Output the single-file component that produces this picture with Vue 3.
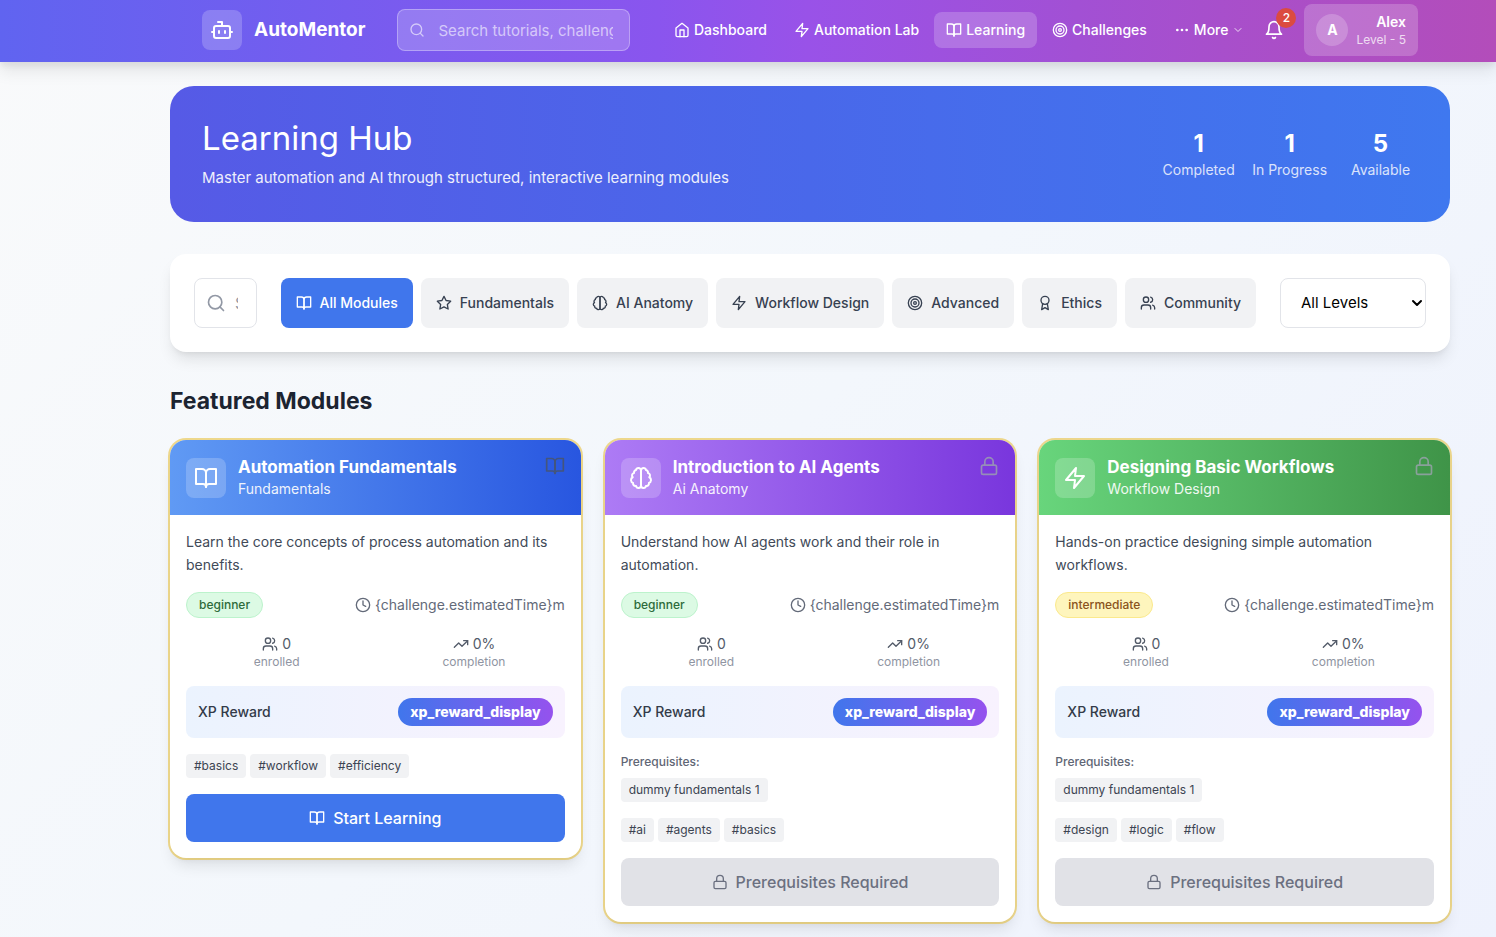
<template>
  <div class="page">
    <header class="topbar">
      <div class="topbar-inner">
        <a href="#" class="brand">
          <span class="brand-logo"><Icon name="bot" :size="24" /></span>
          <span class="brand-name">AutoMentor</span>
        </a>

        <div class="top-search">
          <Icon name="search" :size="16" />
          <input type="text" aria-label="Search" placeholder="Search tutorials, challenges..." />
        </div>

        <nav class="nav">
          <a
            v-for="item in navItems"
            :key="item.label"
            href="#"
            class="nav-link"
            :class="{ active: item.active }"
          >
            <Icon :name="item.icon" :size="16" />
            <span>{{ item.label }}</span>
          </a>
          <button type="button" class="nav-link">
            <Icon name="more" :size="16" />
            <span>More</span>
            <Icon name="chevron" :size="12" class="nav-chevron" />
          </button>
        </nav>

        <div class="user-area">
          <button type="button" class="bell" aria-label="Notifications">
            <Icon name="bell" :size="20" />
            <span class="bell-badge">2</span>
          </button>
          <button type="button" class="profile">
            <span class="avatar">A</span>
            <span class="profile-text">
              <span class="profile-name">Alex</span>
              <span class="profile-level">Level - 5</span>
            </span>
          </button>
        </div>
      </div>
    </header>

    <main class="content">
      <section class="hero">
        <div>
          <h1>Learning Hub</h1>
          <p>Master automation and AI through structured, interactive learning modules</p>
        </div>
        <div class="hero-stats">
          <div v-for="stat in stats" :key="stat.label">
            <div class="stat-value">{{ stat.value }}</div>
            <div class="stat-label">{{ stat.label }}</div>
          </div>
        </div>
      </section>

      <section class="filters">
        <div class="module-search">
          <Icon name="search" :size="20" />
          <input v-model="search" type="text" aria-label="Search modules" placeholder="Search modules..." />
        </div>
        <div class="categories">
          <button
            v-for="cat in categories"
            :key="cat.label"
            type="button"
            class="category"
            :class="{ active: cat.label === selected }"
            @click="selected = cat.label"
          >
            <Icon :name="cat.icon" :size="16" />
            <span>{{ cat.label }}</span>
          </button>
        </div>
        <div class="level">
          <select v-model="level" aria-label="Level">
            <option>All Levels</option>
            <option>Beginner</option>
            <option>Intermediate</option>
            <option>Advanced</option>
          </select>
          <Icon name="chevron" :size="16" :stroke="3" />
        </div>
      </section>

      <h2>Featured Modules</h2>

      <div class="modules">
        <article v-for="mod in modules" :key="mod.title" class="card">
          <div class="card-head" :class="mod.theme">
            <span class="card-icon"><Icon :name="mod.icon" :size="24" /></span>
            <div class="card-titles">
              <h3>{{ mod.title }}</h3>
              <p>{{ mod.category }}</p>
            </div>
            <Icon
              :name="mod.locked ? 'lock' : 'book'"
              :size="20"
              class="card-status"
              :class="{ locked: mod.locked }"
            />
          </div>

          <div class="card-body">
            <p class="description">{{ mod.description }}</p>

            <div class="row">
              <span class="difficulty" :class="mod.difficulty">{{ mod.difficulty }}</span>
              <span class="time"><Icon name="clock" :size="16" />{{ estimatedTime }}</span>
            </div>

            <div class="figures">
              <div>
                <div class="figure"><Icon name="users" :size="16" />0</div>
                <div class="figure-label">enrolled</div>
              </div>
              <div>
                <div class="figure"><Icon name="trend" :size="16" />0%</div>
                <div class="figure-label">completion</div>
              </div>
            </div>

            <div class="row xp">
              <span class="xp-label">XP Reward</span>
              <span class="xp-pill">xp_reward_display</span>
            </div>

            <div v-if="mod.prerequisites.length" class="prereq">
              <div class="prereq-title">Prerequisites:</div>
              <div class="tags">
                <span v-for="p in mod.prerequisites" :key="p" class="tag">{{ p }}</span>
              </div>
            </div>

            <div class="tags">
              <span v-for="tag in mod.tags" :key="tag" class="tag">#{{ tag }}</span>
            </div>

            <button type="button" class="action" :disabled="mod.locked">
              <Icon :name="mod.locked ? 'lock' : 'book'" :size="16" />
              <span>{{ mod.locked ? 'Prerequisites Required' : 'Start Learning' }}</span>
            </button>
          </div>
        </article>
      </div>
    </main>
  </div>
</template>

<script setup>
import { h, ref } from 'vue'

const iconPaths = {
  bot: ['M12 8V4H8', 'M6 8h12a2 2 0 0 1 2 2v8a2 2 0 0 1-2 2H6a2 2 0 0 1-2-2v-8a2 2 0 0 1 2-2z', 'M2 14h2', 'M20 14h2', 'M15 13v2', 'M9 13v2'],
  search: ['M19 11a8 8 0 1 1-16 0 8 8 0 0 1 16 0z', 'm21 21-4.3-4.3'],
  home: ['m3 9 9-7 9 7v11a2 2 0 0 1-2 2H5a2 2 0 0 1-2-2z', 'M9 22V12h6v10'],
  zap: ['M13 2 3 14h9l-1 8 10-12h-9l1-8z'],
  book: ['M2 3h6a4 4 0 0 1 4 4v14a3 3 0 0 0-3-3H2z', 'M22 3h-6a4 4 0 0 0-4 4v14a3 3 0 0 1 3-3h7z'],
  target: ['M22 12a10 10 0 1 1-20 0 10 10 0 0 1 20 0z', 'M18 12a6 6 0 1 1-12 0 6 6 0 0 1 12 0z', 'M14 12a2 2 0 1 1-4 0 2 2 0 0 1 4 0z'],
  more: ['M13 12a1 1 0 1 1-2 0 1 1 0 0 1 2 0z', 'M20 12a1 1 0 1 1-2 0 1 1 0 0 1 2 0z', 'M6 12a1 1 0 1 1-2 0 1 1 0 0 1 2 0z'],
  chevron: ['m6 9 6 6 6-6'],
  bell: ['M6 8a6 6 0 0 1 12 0c0 7 3 9 3 9H3s3-2 3-9', 'M10.3 21a1.94 1.94 0 0 0 3.4 0'],
  star: ['m12 2 3.09 6.26L22 9.27l-5 4.87 1.18 6.88L12 17.77l-6.18 3.25L7 14.14 2 9.27l6.91-1.01L12 2z'],
  brain: [
    'M9.5 2A2.5 2.5 0 0 1 12 4.5v15a2.5 2.5 0 0 1-4.96.44 2.5 2.5 0 0 1-2.96-3.08 3 3 0 0 1-.34-5.58 2.5 2.5 0 0 1 1.32-4.24 2.5 2.5 0 0 1 1.98-3A2.5 2.5 0 0 1 9.5 2z',
    'M14.5 2A2.5 2.5 0 0 0 12 4.5v15a2.5 2.5 0 0 0 4.96.44 2.5 2.5 0 0 0 2.96-3.08 3 3 0 0 0 .34-5.58 2.5 2.5 0 0 0-1.32-4.24 2.5 2.5 0 0 0-1.98-3A2.5 2.5 0 0 0 14.5 2z',
  ],
  award: ['M18 8a6 6 0 1 1-12 0 6 6 0 0 1 12 0z', 'M15.48 12.89 17 22l-5-3-5 3 1.52-9.11'],
  users: ['M16 21v-2a4 4 0 0 0-4-4H6a4 4 0 0 0-4 4v2', 'M13 7a4 4 0 1 1-8 0 4 4 0 0 1 8 0z', 'M22 21v-2a4 4 0 0 0-3-3.87', 'M16 3.13a4 4 0 0 1 0 7.75'],
  clock: ['M22 12a10 10 0 1 1-20 0 10 10 0 0 1 20 0z', 'M12 6v6l4 2'],
  trend: ['m22 7-8.5 8.5-5-5L2 17', 'M16 7h6v6'],
  lock: ['M5 11h14a2 2 0 0 1 2 2v7a2 2 0 0 1-2 2H5a2 2 0 0 1-2-2v-7a2 2 0 0 1 2-2z', 'M7 11V7a5 5 0 0 1 10 0v4'],
}

const Icon = (props) =>
  h(
    'svg',
    {
      width: props.size,
      height: props.size,
      viewBox: '0 0 24 24',
      fill: 'none',
      stroke: 'currentColor',
      'stroke-width': props.stroke || 2,
      'stroke-linecap': 'round',
      'stroke-linejoin': 'round',
      'aria-hidden': 'true',
    },
    iconPaths[props.name].map((d) => h('path', { d })),
  )
Icon.props = ['name', 'size', 'stroke']

const search = ref('')
const selected = ref('All Modules')
const level = ref('All Levels')

const estimatedTime = '{challenge.estimatedTime}m'

const navItems = [
  { label: 'Dashboard', icon: 'home' },
  { label: 'Automation Lab', icon: 'zap' },
  { label: 'Learning', icon: 'book', active: true },
  { label: 'Challenges', icon: 'target' },
]

const stats = [
  { value: 1, label: 'Completed' },
  { value: 1, label: 'In Progress' },
  { value: 5, label: 'Available' },
]

const categories = [
  { label: 'All Modules', icon: 'book' },
  { label: 'Fundamentals', icon: 'star' },
  { label: 'AI Anatomy', icon: 'brain' },
  { label: 'Workflow Design', icon: 'zap' },
  { label: 'Advanced', icon: 'target' },
  { label: 'Ethics', icon: 'award' },
  { label: 'Community', icon: 'users' },
]

const modules = [
  {
    title: 'Automation Fundamentals',
    category: 'Fundamentals',
    description: 'Learn the core concepts of process automation and its benefits.',
    difficulty: 'beginner',
    icon: 'book',
    theme: 'blue',
    prerequisites: [],
    tags: ['basics', 'workflow', 'efficiency'],
    locked: false,
  },
  {
    title: 'Introduction to AI Agents',
    category: 'Ai Anatomy',
    description: 'Understand how AI agents work and their role in automation.',
    difficulty: 'beginner',
    icon: 'brain',
    theme: 'purple',
    prerequisites: ['dummy fundamentals 1'],
    tags: ['ai', 'agents', 'basics'],
    locked: true,
  },
  {
    title: 'Designing Basic Workflows',
    category: 'Workflow Design',
    description: 'Hands-on practice designing simple automation workflows.',
    difficulty: 'intermediate',
    icon: 'zap',
    theme: 'green',
    prerequisites: ['dummy fundamentals 1'],
    tags: ['design', 'logic', 'flow'],
    locked: true,
  },
]
</script>

<style>
body {
  margin: 0;
}
</style>

<style scoped>
* {
  box-sizing: border-box;
}

.page {
  min-height: 100vh;
  font-family: Inter, 'Liberation Sans', sans-serif;
  font-size: 16px;
  line-height: 24px;
  color: #1c2431;
  background: linear-gradient(135deg, #f9fafb, #f3f7fc 50%, #eef2fd);
  -webkit-font-smoothing: antialiased;
}

h1,
h2,
h3,
p {
  margin: 0;
}

button,
input,
select {
  font: inherit;
  color: inherit;
}

button {
  border: 0;
  background: none;
  cursor: pointer;
}

svg {
  flex: none;
}

/* Top bar */
.topbar {
  position: relative;
  padding: 4px 0 6px 124px;
  color: #fff;
  background: linear-gradient(90deg, #6064f0, #8a55ee 44%, #9952e8 54%, #a250d4 72%, #b34dba);
  box-shadow: 0 10px 15px rgba(0, 0, 0, 0.08), 0 4px 6px rgba(0, 0, 0, 0.06);
}

.topbar-inner {
  display: flex;
  align-items: center;
  max-width: 1280px;
  margin: 0 auto;
  padding: 0 32px;
}

.brand {
  display: flex;
  align-items: center;
  gap: 12px;
  color: #fff;
  text-decoration: none;
}

.brand-logo {
  display: flex;
  align-items: center;
  justify-content: center;
  width: 40px;
  height: 40px;
  border-radius: 8px;
  background: rgba(255, 255, 255, 0.2);
}

.brand-name {
  font-size: 19px;
  line-height: 28px;
  font-weight: 700;
}

.top-search {
  position: relative;
  flex: 1;
  min-width: 0;
  margin: 0 32px;
}

.top-search svg {
  position: absolute;
  left: 12px;
  top: 13px;
  opacity: 0.6;
}

.top-search input {
  display: block;
  width: 100%;
  height: 42px;
  padding: 0 16px 0 40px;
  border: 1px solid rgba(255, 255, 255, 0.3);
  border-radius: 8px;
  background: rgba(255, 255, 255, 0.2);
  font-size: 15px;
}

.top-search input::placeholder {
  color: rgba(255, 255, 255, 0.6);
}

.nav {
  display: flex;
  gap: 3px;
}

.nav-link {
  display: flex;
  align-items: center;
  gap: 4px;
  padding: 8px 12px;
  border-radius: 8px;
  color: #fff;
  font-size: 14px;
  line-height: 20px;
  font-weight: 500;
  text-decoration: none;
  white-space: nowrap;
}

.nav-link.active {
  background: rgba(255, 255, 255, 0.2);
}

.nav-chevron {
  opacity: 0.8;
}

.user-area {
  display: flex;
  align-items: center;
  gap: 12px;
}

.bell {
  position: relative;
  display: flex;
  padding: 8px;
}

.bell-badge {
  position: absolute;
  top: -4px;
  right: -4px;
  width: 20px;
  height: 20px;
  border-radius: 10px;
  background: #db4b40;
  font-size: 12px;
  line-height: 20px;
  font-weight: 500;
  text-align: center;
}

.profile {
  display: flex;
  align-items: center;
  gap: 8px;
  padding: 8px 12px;
  border-radius: 8px;
  background: rgba(255, 255, 255, 0.2);
}

.avatar {
  width: 32px;
  height: 32px;
  border-radius: 50%;
  background: rgba(255, 255, 255, 0.2);
  font-size: 14px;
  line-height: 32px;
  font-weight: 700;
}

.profile-text {
  display: flex;
  flex-direction: column;
  text-align: right;
}

.profile-name {
  font-size: 14px;
  line-height: 20px;
  font-weight: 600;
}

.profile-level {
  font-size: 12px;
  line-height: 16px;
  opacity: 0.75;
}

/* Content */
.content {
  padding: 24px 0 24px 124px;
}

.content > * {
  max-width: 1280px;
  margin-left: auto;
  margin-right: auto;
}

.hero {
  display: flex;
  align-items: center;
  justify-content: space-between;
  padding: 32px;
  border-radius: 24px;
  color: #fff;
  background: linear-gradient(90deg, #565ae6, #4968ea 50%, #3f78ef);
}

.hero h1 {
  margin-bottom: 8px;
  font-size: 33px;
  line-height: 40px;
  font-weight: 400;
}

.hero p {
  font-size: 15px;
  opacity: 0.9;
}

.hero-stats {
  display: grid;
  grid-template-columns: repeat(3, 1fr);
  gap: 16px;
  text-align: center;
}

.stat-value {
  font-size: 24px;
  line-height: 32px;
  font-weight: 700;
}

.stat-label {
  font-size: 14px;
  line-height: 20px;
  opacity: 0.8;
}

.filters {
  display: flex;
  gap: 24px;
  margin-top: 32px;
  padding: 24px;
  border-radius: 16px;
  background: #fff;
  box-shadow: 0 10px 15px -3px rgba(0, 0, 0, 0.1), 0 4px 6px -4px rgba(0, 0, 0, 0.1);
}

.module-search {
  position: relative;
  flex: 1;
  min-width: 0;
}

.module-search svg {
  position: absolute;
  left: 12px;
  top: 15px;
  color: #9298a5;
}

.module-search input {
  display: block;
  width: 100%;
  height: 50px;
  padding: 0 18px 0 40px;
  border: 1px solid #e2e4e9;
  border-radius: 8px;
  background: #fff;
}

.module-search input::placeholder {
  color: #9298a5;
}

.categories {
  display: flex;
  gap: 8px;
}

.category {
  display: flex;
  align-items: center;
  gap: 8px;
  padding: 0 15px;
  border-radius: 8px;
  background: #f1f2f4;
  color: #374151;
  font-size: 14px;
  line-height: 20px;
  font-weight: 500;
  white-space: nowrap;
}

.category.active {
  background: #4076ec;
  color: #fff;
}

.level {
  position: relative;
}

.level select {
  display: block;
  width: 146px;
  height: 50px;
  padding: 0 20px;
  border: 1px solid #e2e4e9;
  border-radius: 8px;
  background: #fff;
  color: #000;
  font-size: 15px;
  appearance: none;
}

.level svg {
  position: absolute;
  right: 1px;
  top: 17px;
  color: #000;
  pointer-events: none;
}

h2 {
  margin-top: 33px;
  margin-bottom: 23px;
  font-size: 23px;
  line-height: 32px;
  font-weight: 700;
}

/* Module cards */
.modules {
  display: grid;
  grid-template-columns: repeat(3, 1fr);
  align-items: start;
  gap: 24px;
}

.card {
  border-radius: 16px;
  background: #fff;
  box-shadow: 0 0 0 2px rgba(232, 194, 65, 0.6), 0 10px 15px -3px rgba(0, 0, 0, 0.1),
    0 4px 6px -4px rgba(0, 0, 0, 0.1);
}

.card-head {
  display: flex;
  align-items: center;
  gap: 12px;
  padding: 16px;
  border-radius: 16px 16px 0 0;
  color: #fff;
}

.card-head.blue {
  background: linear-gradient(90deg, #609af4, #2856e0);
}

.card-head.purple {
  background: linear-gradient(90deg, #ad7bf5, #7936dd);
}

.card-head.green {
  background: linear-gradient(90deg, #68d57c, #3f9448);
}

.card-icon {
  display: flex;
  align-items: center;
  justify-content: center;
  width: 40px;
  height: 40px;
  border-radius: 8px;
  background: rgba(255, 255, 255, 0.2);
}

.card-titles {
  flex: 1;
}

.card-titles h3 {
  font-size: 17px;
  line-height: 23px;
  font-weight: 700;
}

.card-titles p {
  font-size: 14px;
  line-height: 20px;
  opacity: 0.9;
}

.card-status {
  align-self: flex-start;
  color: #4b5563;
  opacity: 0.8;
}

.card-status.locked {
  color: #9ca3af;
}

.card-body {
  display: flex;
  flex-direction: column;
  gap: 16px;
  padding: 15px 16px 16px;
}

.description {
  font-size: 14px;
  line-height: 23px;
  color: #414a58;
}

.row {
  display: flex;
  align-items: center;
  justify-content: space-between;
}

.difficulty {
  padding: 4px 12px;
  border: 1px solid;
  border-radius: 13px;
  font-size: 12px;
  line-height: 16px;
  font-weight: 500;
}

.difficulty.beginner {
  border-color: #bcf3cc;
  background: #dcfae4;
  color: #2d6b3b;
}

.difficulty.intermediate {
  border-color: #fbe98c;
  background: #fef5bd;
  color: #8a5320;
}

.time {
  display: flex;
  align-items: center;
  gap: 4px;
  font-size: 14px;
  line-height: 20px;
  color: #636a79;
}

.figures {
  display: grid;
  grid-template-columns: 1fr 1fr;
  gap: 16px;
  text-align: center;
}

.figure {
  display: flex;
  align-items: center;
  justify-content: center;
  gap: 4px;
  font-size: 14px;
  line-height: 20px;
  color: #535b69;
}

.figure-label {
  font-size: 12px;
  line-height: 16px;
  color: #8f95a2;
}

.xp {
  padding: 12px;
  border-radius: 8px;
  background: linear-gradient(90deg, #ebf3fe, #f8f2fe);
}

.xp-label {
  font-size: 14px;
  line-height: 20px;
  font-weight: 500;
  color: #333b49;
}

.xp-pill {
  padding: 4px 12px;
  border-radius: 14px;
  background: linear-gradient(90deg, #4076ec, #9552ee);
  color: #fff;
  font-size: 14px;
  line-height: 20px;
  font-weight: 800;
}

.prereq-title {
  margin-bottom: 8px;
  font-size: 12px;
  line-height: 16px;
  font-weight: 500;
  color: #5f6675;
}

.tags {
  display: flex;
  flex-wrap: wrap;
  gap: 4px;
}

.tag {
  padding: 4px 8px;
  border-radius: 4px;
  background: #f1f2f4;
  color: #3c4452;
  font-size: 12px;
  line-height: 16px;
}

.action {
  display: flex;
  align-items: center;
  justify-content: center;
  gap: 8px;
  padding: 12px 16px;
  border-radius: 8px;
  background: #4076ec;
  color: #fff;
  font-weight: 500;
}

.action:disabled {
  background: #e1e2e7;
  color: #6b7080;
  cursor: not-allowed;
}
</style>
